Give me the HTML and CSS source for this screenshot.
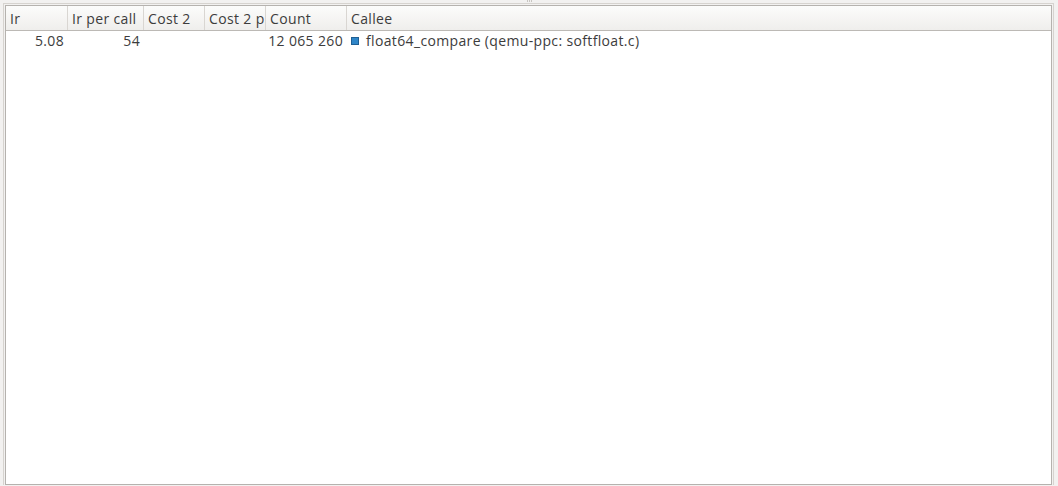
FILE: index.html
```html
<!DOCTYPE html>
<html>
<head>
<meta charset="utf-8">
<link rel="stylesheet" href="styles.css">
</head>
<body>
<div class="grip"><span></span><span></span><span></span></div>
<div class="frame">
  <div class="inner">
    <div class="header">
      <div class="hc c1">Ir</div>
      <div class="hc c2">Ir per call</div>
      <div class="hc c3">Cost 2</div>
      <div class="hc c4">Cost 2 p</div>
      <div class="hc c5">Count</div>
      <div class="hc c6">Callee</div>
    </div>
    <div class="row">
      <div class="dc c1 num">5.08</div>
      <div class="dc c2 num">54</div>
      <div class="dc c3 num"></div>
      <div class="dc c4 num"></div>
      <div class="dc c5 num">12 065 260</div>
      <div class="dc c6 callee"><span class="sq"></span>float64_compare (qemu-ppc: softfloat.c)</div>
    </div>
  </div>
</div>
</body>
</html>
```
FILE: styles.css
```css
html, body {
  margin: 0;
  padding: 0;
  background: #f2f1f0;
  width: 1058px;
  height: 486px;
  overflow: hidden;
  font-family: "Open Sans", "DejaVu Sans", sans-serif;
  font-size: 14px;
  letter-spacing: 0.35px;
  color: #3c3c3c;
}
.grip {
  height: 3px;
  display: flex;
  justify-content: center;
  gap: 1px;
}
.grip span {
  width: 1px;
  height: 2px;
  background: #c8c5c1;
}
.frame {
  margin: 0 4px 0 3px;
  height: 482px;
  box-sizing: border-box;
  border: 1px solid #d6d3cf;
  padding: 1px;
  border-bottom: none;
  display: flex;
}
.inner {
  flex: 1;
  border: 1px solid #b5b2ae;
  background: #ffffff;
  height: 480px;
  box-sizing: border-box;
}
.header {
  display: flex;
  height: 25px;
  background: linear-gradient(#fcfcfb, #efeeec);
  border-bottom: 1px solid #bcb9b5;
  box-sizing: border-box;
}
.hc {
  box-sizing: border-box;
  padding-left: 4px;
  padding-top: 2px;
  line-height: 22px;
  border-right: 1px solid #d9d6d2;
  white-space: nowrap;
  overflow: hidden;
}
.hc.c6 { border-right: none; }
.c1 { width: 62px; }
.c2 { width: 76px; }
.c3 { width: 61px; }
.c4 { width: 61px; }
.c5 { width: 81px; }
.c6 { flex: 1; }
.row {
  display: flex;
  height: 22px;
}
.dc {
  box-sizing: border-box;
  line-height: 20px;
  white-space: nowrap;
}
.num {
  text-align: right;
  padding-right: 4px;
}
.callee {
  padding-left: 4px;
  display: flex;
  align-items: center;
  height: 20px;
}
.sq {
  width: 8px;
  height: 8px;
  background: #2f86c8;
  border: 1px solid #1f5f94;
  box-sizing: border-box;
  margin-right: 7px;
}
```
